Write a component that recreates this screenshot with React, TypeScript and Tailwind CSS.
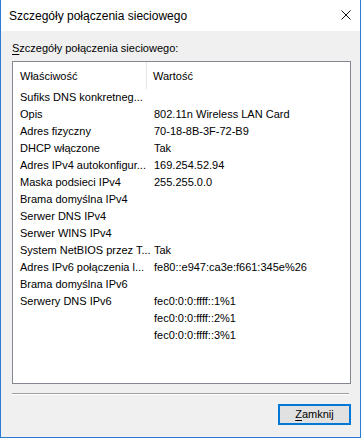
import React from "react";

const rows: [string, string][] = [
  ["Sufiks DNS konkretneg...", ""],
  ["Opis", "802.11n Wireless LAN Card"],
  ["Adres fizyczny", "70-18-8B-3F-72-B9"],
  ["DHCP włączone", "Tak"],
  ["Adres IPv4 autokonfigur...", "169.254.52.94"],
  ["Maska podsieci IPv4", "255.255.0.0"],
  ["Brama domyślna IPv4", ""],
  ["Serwer DNS IPv4", ""],
  ["Serwer WINS IPv4", ""],
  ["System NetBIOS przez T...", "Tak"],
  ["Adres IPv6 połączenia l...", "fe80::e947:ca3e:f661:345e%26"],
  ["Brama domyślna IPv6", ""],
  ["Serwery DNS IPv6", "fec0:0:0:ffff::1%1"],
  ["", "fec0:0:0:ffff::2%1"],
  ["", "fec0:0:0:ffff::3%1"],
];

export default function App() {
  return (
    <div className="w-[362px] h-[438px] bg-white font-['Liberation_Sans',Arial,sans-serif] text-black">
      {/* window frame */}
      <div className="w-[361px] h-[438px] flex flex-col border-x border-b border-[#2a7bd3]">
        {/* title bar */}
        <div className="h-[31px] shrink-0 bg-white flex items-center justify-between pl-[8px] pr-[9px]">
          <span className="text-[12px]">Szczegóły połączenia sieciowego</span>
          <svg width="10" height="10" viewBox="0 0 10 10" className="mt-[-1px]">
            <path d="M0.5 0.5L9.5 9.5M9.5 0.5L0.5 9.5" stroke="#111" strokeWidth="1" />
          </svg>
        </div>

        {/* body */}
        <div className="flex-1 bg-[#f0f0f0] flex flex-col pl-[11px] pr-[9px] text-[11px]">
          <div className="mt-[10px] h-[15px] leading-[15px]">
            <span className="underline underline-offset-2">S</span>zczegóły połączenia sieciowego:
          </div>

          {/* list view */}
          <div className="mt-[5px] w-[339px] h-[323px] bg-white border border-[#828790] flex flex-col">
            <div className="h-[27px] flex items-center">
              <div className="w-[134px] h-full flex items-center pl-[7px] pt-[2px] border-r border-[#e5e5e5]">
                Właściwość
              </div>
              <div className="pl-[6px] pt-[2px]">Wartość</div>
            </div>
            {rows.map(([k, v], i) => (
              <div key={i} className="h-[17px] flex items-center">
                <div className="w-[134px] shrink-0 pl-[7px] whitespace-nowrap">{k}</div>
                <div className="pl-[7px] whitespace-nowrap">{v}</div>
              </div>
            ))}
          </div>

          {/* separator */}
          <div className="mt-[9px] w-[337px] h-[2px] border-t border-[#a0a0a0] border-b border-b-white" />

          {/* button */}
          <div className="flex justify-end mt-[9px]">
            <button className="w-[73px] h-[21px] bg-[#e1e1e1] border-2 border-[#0078d7] text-[11px] leading-none flex items-center justify-center">
              <span className="underline underline-offset-2">Z</span>amknij
            </button>
          </div>
        </div>
      </div>
    </div>
  );
}
